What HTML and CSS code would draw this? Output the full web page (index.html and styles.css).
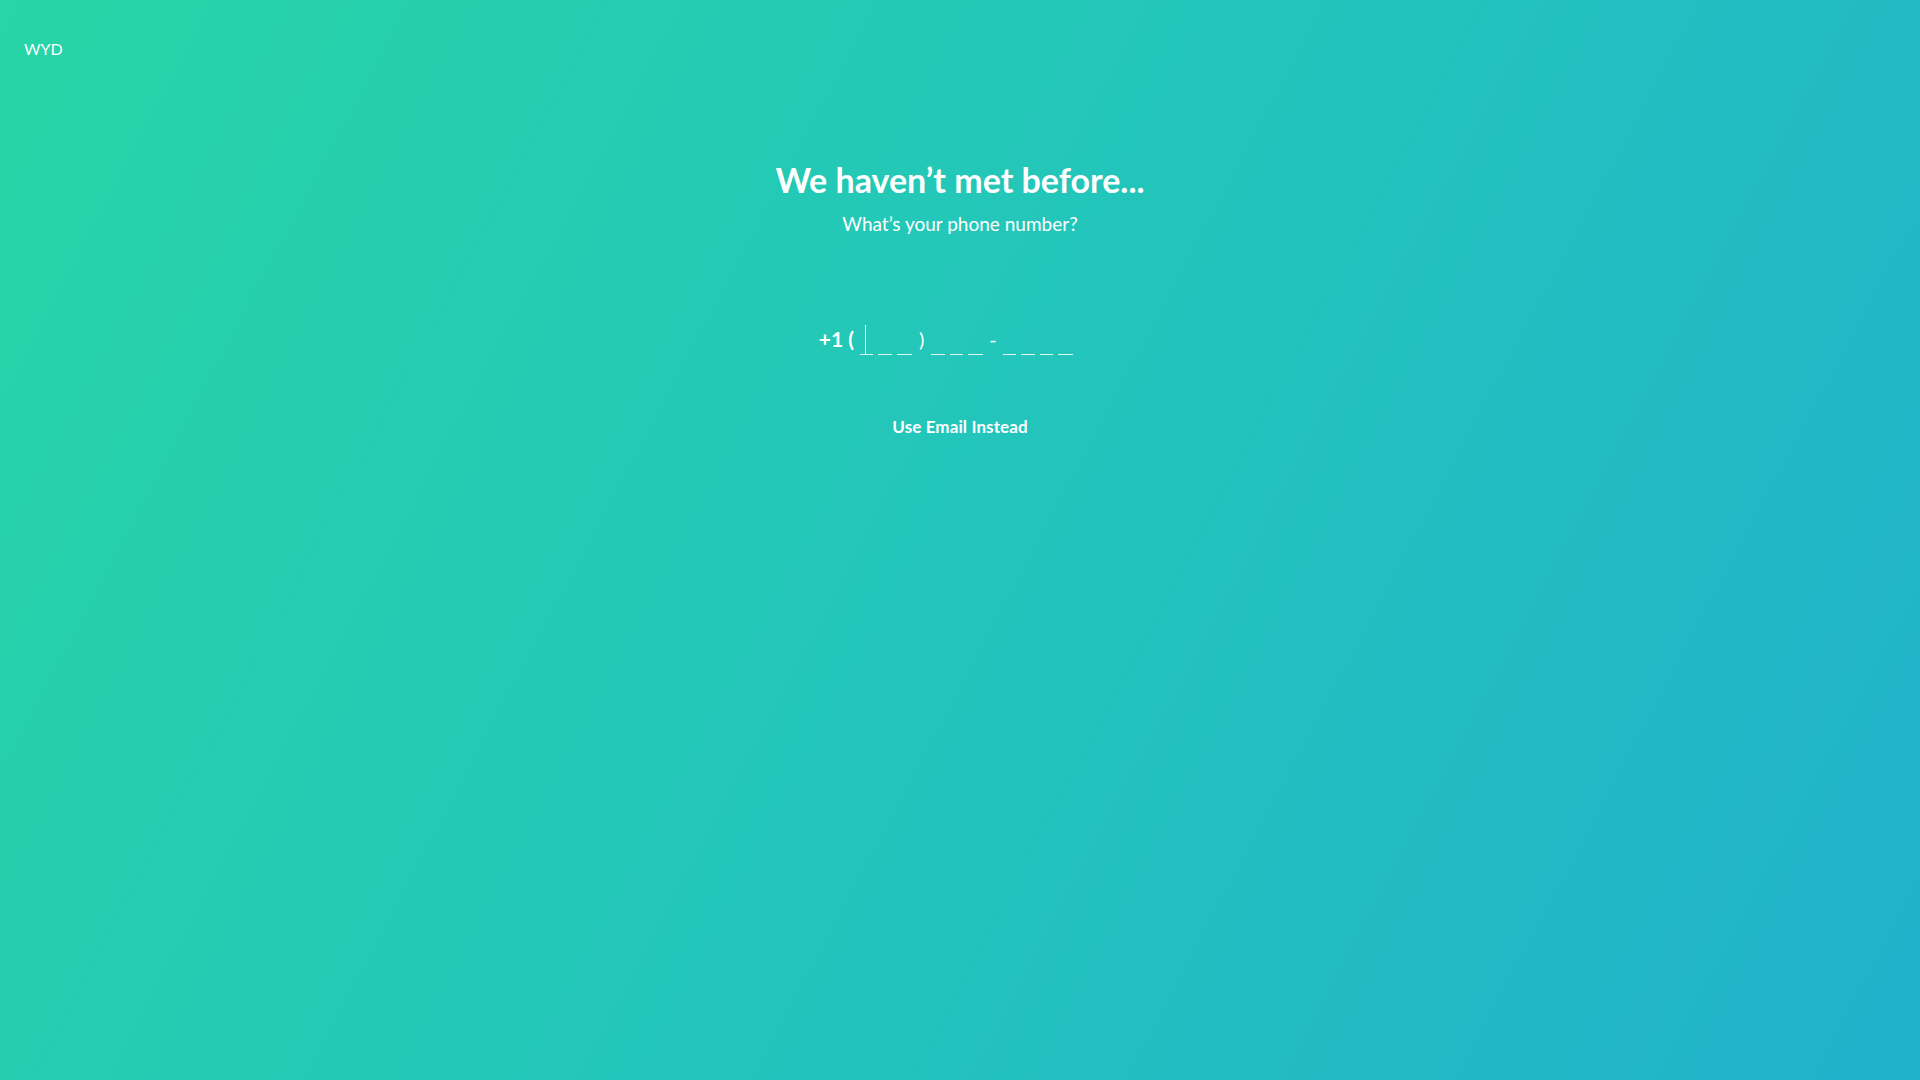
FILE: index.html
```html
<!DOCTYPE html>
<html lang="en">
<head>
<meta charset="utf-8">
<title>WYD</title>
<link rel="stylesheet" href="styles.css">
</head>
<body>
<div class="page">
  <header class="topbar">
    <div class="logo">WYD</div>
  </header>
  <main class="content">
    <h1 class="title">We haven’t met before...</h1>
    <p class="subtitle">What’s your phone number?</p>
    <div class="phone">
      <span class="prefix">+1 (</span>
      <span class="group">
        <span class="slot slot-active"><span class="cursor"></span></span>
        <span class="slot"></span>
        <span class="slot"></span>
      </span>
      <span class="paren">)</span>
      <span class="group">
        <span class="slot"></span>
        <span class="slot"></span>
        <span class="slot"></span>
      </span>
      <span class="dash">-</span>
      <span class="group">
        <span class="slot"></span>
        <span class="slot"></span>
        <span class="slot"></span>
        <span class="slot"></span>
      </span>
    </div>
    <button class="alt-btn" type="button">Use Email Instead</button>
  </main>
</div>
</body>
</html>
```

FILE: styles.css
```css
html, body {
  margin: 0;
  padding: 0;
  height: 100%;
}
body {
  font-family: Lato, "Open Sans", "Noto Sans", sans-serif;
  color: #ffffff;
  background: linear-gradient(118deg, #27d5a6 0%, #23c5bb 50%, #21b1cc 100%);
  min-height: 100vh;
}
.page {
  min-height: 100vh;
  display: flex;
  flex-direction: column;
}
.topbar {
  padding: 37px 24px 0;
  height: 24px;
}
.logo {
  font-size: 16px;
  line-height: 24px;
  font-weight: 400;
}
.content {
  display: flex;
  flex-direction: column;
  align-items: center;
  padding-top: 96px;
}
.title {
  margin: 0;
  font-size: 34px;
  line-height: 46px;
  font-weight: 700;
  letter-spacing: 0;
}
.subtitle {
  margin: 8px 0 0;
  font-size: 19px;
  line-height: 26px;
  font-weight: 400;
}
.phone {
  margin: 88px 28px 0 0;
  display: flex;
  align-items: flex-end;
  height: 30px;
  font-size: 20px;
  line-height: 24px;
}
.prefix {
  font-size: 21px;
  font-weight: 700;
  margin-right: 6px;
  padding-bottom: 4px;
}
.paren {
  padding-bottom: 4px;
  margin: 0 7px 0 7px;
}
.dash {
  padding-bottom: 4px;
  margin: 0 6px 0 6px;
}
.group {
  display: flex;
  gap: 5px;
}
.slot {
  position: relative;
  width: 13.5px;
  height: 30px;
  border-bottom: 1.5px solid rgba(255, 255, 255, 0.85);
  box-sizing: border-box;
}
.group .slot:last-child {
  width: 15px;
}
.cursor {
  position: absolute;
  left: 5px;
  bottom: 0;
  width: 1.5px;
  height: 29px;
  background: #ffffff;
}
.alt-btn {
  margin-top: 56px;
  background: none;
  border: none;
  padding: 4px 8px;
  color: #ffffff;
  font-family: inherit;
  font-size: 17px;
  line-height: 24px;
  font-weight: 700;
  letter-spacing: 0.1px;
  cursor: pointer;
}
```
